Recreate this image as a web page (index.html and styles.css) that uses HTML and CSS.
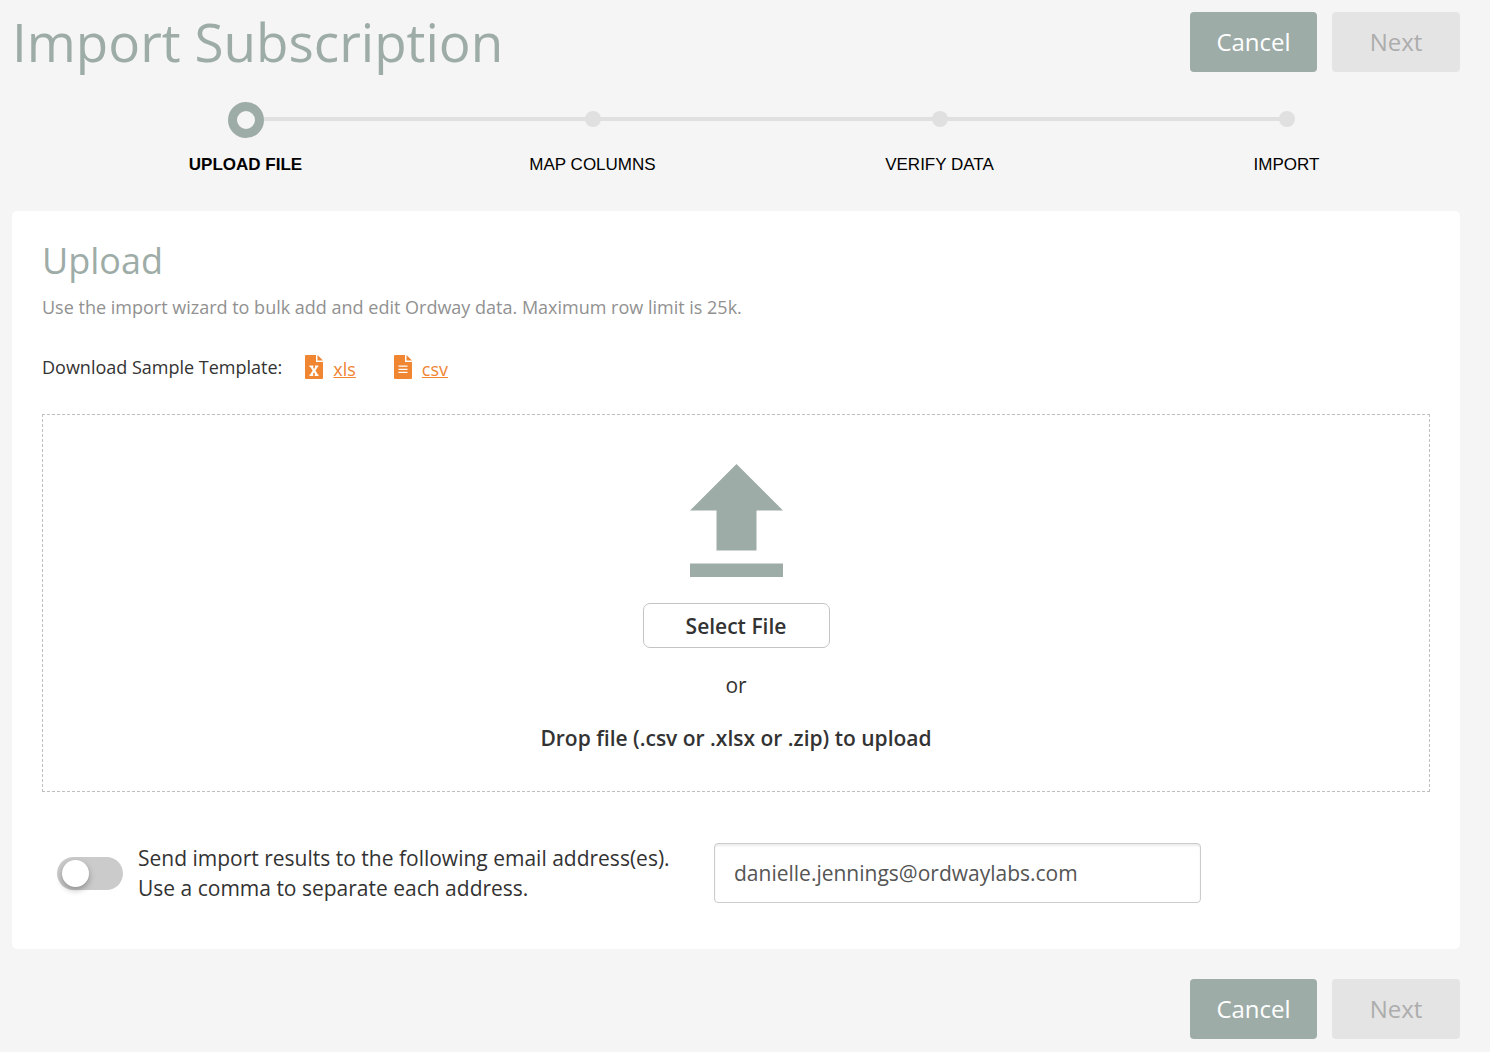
FILE: index.html
```
<!DOCTYPE html>
<html lang="en">
<head>
  <meta charset="utf-8">
  <meta name="viewport" content="width=device-width, initial-scale=1">
  <title>Import Subscription</title>
  <link rel="stylesheet" href="styles.css">
</head>
<body>
  <header class="page-header">
    <h1 class="page-title">Import Subscription</h1>
    <div class="actions">
      <button type="button" class="btn btn-cancel">Cancel</button>
      <button type="button" class="btn btn-next" disabled>Next</button>
    </div>
  </header>

  <ol class="steps">
    <li class="step step-active" aria-current="step">
      <span class="step-marker"><span class="step-dot"></span></span>
      <span class="step-label">Upload File</span>
    </li>
    <li class="step">
      <span class="step-marker"><span class="step-dot"></span></span>
      <span class="step-label">Map Columns</span>
    </li>
    <li class="step">
      <span class="step-marker"><span class="step-dot"></span></span>
      <span class="step-label">Verify Data</span>
    </li>
    <li class="step">
      <span class="step-marker"><span class="step-dot"></span></span>
      <span class="step-label">Import</span>
    </li>
  </ol>

  <main class="card">
    <h2 class="card-title">Upload</h2>
    <p class="card-hint">Use the import wizard to bulk add and edit Ordway data. Maximum row limit is 25k.</p>

    <div class="templates">
      <span class="templates-label">Download Sample Template:</span>
      <a class="template-link" href="#xls">
        <svg class="file-icon" viewBox="0 0 18 24" aria-hidden="true">
          <path fill="currentColor" d="M1 0H11V7H18V23Q18 24 17 24H1Q0 24 0 23V1Q0 0 1 0ZM12.500 0L18 5.500H12.500Z"/>
          <path fill="#fff" d="M4.500 10.500H8.300V12H8L9.200 14L10.400 12H10V10.500H13.300V12H12.700L10.400 15.600L12.900 19.500H13.500V21H9.700V19.500H10.300L9 17.300L7.700 19.500H8.200V21H4.500V19.500H5.100L7.700 15.600L5.200 12H4.500Z"/>
        </svg>
        <span class="template-name">xls</span>
      </a>
      <a class="template-link" href="#csv">
        <svg class="file-icon" viewBox="0 0 18 24" aria-hidden="true">
          <path fill="currentColor" d="M1 0H11V7H18V23Q18 24 17 24H1Q0 24 0 23V1Q0 0 1 0ZM12.500 0L18 5.500H12.500Z"/>
          <path stroke="#fff" stroke-width="1.200" d="M4.500 11.200H13.500M4.500 14.300H13.500M4.500 17.400H13.500"/>
        </svg>
        <span class="template-name">csv</span>
      </a>
    </div>

    <section class="dropzone">
      <svg class="upload-icon" viewBox="0 0 93 113" aria-hidden="true">
        <path fill="currentColor" d="M46.500 0L93 46.500H66.500V86.500H26.500V46.500H0ZM0 99.500H93V113H0Z"/>
      </svg>
      <button type="button" class="btn-select">Select File</button>
      <p class="drop-or">or</p>
      <p class="drop-text">Drop file (.csv or .xlsx or .zip) to upload</p>
    </section>

    <div class="notify">
      <div class="notify-toggle">
        <input type="checkbox" class="switch" id="send-results">
        <label for="send-results">Send import results to the following email address(es).<br>Use a comma to separate each address.</label>
      </div>
      <input type="text" class="email" aria-label="Email addresses" value="danielle.jennings@ordwaylabs.com">
    </div>
  </main>

  <footer class="page-footer">
    <div class="actions">
      <button type="button" class="btn btn-cancel">Cancel</button>
      <button type="button" class="btn btn-next" disabled>Next</button>
    </div>
  </footer>
</body>
</html>
```
FILE: styles.css
```
* {
  box-sizing: border-box;
}

body {
  margin: 0;
  padding: 12px 30px 12px 12px;
  background: #f5f5f5;
  color: #333;
  font-family: "Open Sans", sans-serif;
  font-size: 21px;
  line-height: 30px;
}

h1,
h2,
p,
ol {
  margin: 0;
}

button,
input {
  margin: 0;
  font-family: inherit;
}

/* Header and action buttons */
.page-header {
  display: flex;
  justify-content: space-between;
  align-items: flex-start;
}

.page-title {
  color: #9eaca7;
  font-size: 53px;
  line-height: 60px;
  font-weight: 400;
}

.actions {
  display: flex;
  gap: 15px;
}

.btn {
  width: 128px;
  height: 60px;
  padding: 0;
  border: 0;
  border-radius: 4px;
  font-size: 24px;
  line-height: 30px;
}

.btn-cancel {
  width: 127px;
  background: #9eaca7;
  color: #fff;
}

.btn-next {
  background: #e4e4e4;
  color: #adadad;
}

/* Wizard progress */
.steps {
  display: grid;
  grid-template-columns: repeat(4, 1fr);
  margin: 30px 0 34px;
  padding: 0 0 0 60px;
  list-style: none;
  font-family: "Liberation Sans", Arial, sans-serif;
  font-size: 17px;
  line-height: 24px;
  color: #000;
}

.step {
  display: flex;
  flex-direction: column;
  align-items: center;
  gap: 17px;
  text-transform: uppercase;
}

.step-marker {
  position: relative;
  display: flex;
  justify-content: center;
  align-items: center;
  width: 100%;
  height: 34px;
}

.step:not(:last-child) .step-marker::after {
  content: "";
  position: absolute;
  top: 15px;
  left: 50%;
  width: 100%;
  height: 4px;
  background: #e0e0e0;
}

.step-dot {
  position: relative;
  z-index: 1;
  width: 16px;
  height: 16px;
  border-radius: 50%;
  background: #e0e0e0;
}

.step-active .step-marker {
  align-items: flex-start;
}

.step-active .step-dot {
  flex: none;
  width: 36px;
  height: 36px;
  border: 9px solid #9eaca7;
  background: #f5f5f5;
}

.step-active .step-label {
  font-weight: 700;
}

/* Upload card */
.card {
  padding: 30px;
  border-radius: 5px;
  background: #fff;
}

.card-title {
  color: #9eaca7;
  font-size: 36px;
  line-height: 40px;
  font-weight: 400;
}

.card-hint {
  margin-top: 14px;
  color: #919191;
  font-size: 18px;
  line-height: 24px;
}

.templates {
  display: flex;
  align-items: center;
  margin-top: 36px;
  font-size: 18px;
  line-height: 24px;
}

.template-link {
  display: flex;
  align-items: flex-end;
  gap: 10px;
  margin-left: 23px;
  color: #f08532;
  line-height: 20px;
}

.template-link + .template-link {
  margin-left: 38px;
}

.file-icon {
  width: 18px;
  height: 24px;
}

.dropzone {
  display: flex;
  flex-direction: column;
  align-items: center;
  margin-top: 35px;
  padding: 49px 20px 38px;
  border: 1px dashed #bfbfbf;
}

.upload-icon {
  width: 93px;
  height: 113px;
  color: #9eaca7;
}

.btn-select {
  width: 187px;
  height: 45px;
  margin-top: 26px;
  padding: 0;
  border: 1px solid #c4c4c4;
  border-radius: 7px;
  background: #fff;
  color: #333;
  font-size: 21px;
  line-height: 30px;
  font-weight: 600;
}

.drop-or {
  margin-top: 22px;
}

.drop-text {
  margin-top: 23px;
  font-weight: 600;
}

/* Result notification */
.notify {
  display: grid;
  grid-template-columns: 672fr 487fr 229fr;
  align-items: center;
  margin-top: 51px;
  padding-bottom: 16px;
}

.notify-toggle {
  display: flex;
  align-items: center;
  gap: 15px;
  padding-left: 15px;
}

.switch {
  appearance: none;
  flex: none;
  display: flex;
  align-items: center;
  width: 66px;
  height: 33px;
  padding-left: 5px;
  border-radius: 17px;
  background: #cbcbcb;
}

.switch::before {
  content: "";
  width: 27px;
  height: 27px;
  border-radius: 50%;
  background: #fff;
  box-shadow: 0 3px 6px rgba(0, 0, 0, 0.3);
}

.switch:checked {
  justify-content: flex-end;
  padding: 0 5px 0 0;
  background: #9eaca7;
}

.email {
  min-width: 0;
  height: 60px;
  padding: 0 19px;
  border: 1px solid #ccc;
  border-radius: 4px;
  background: #fff;
  box-shadow: inset 0 2px 2px rgba(0, 0, 0, 0.08);
  color: #555;
  font-size: 21px;
}

.page-footer {
  display: flex;
  justify-content: flex-end;
  margin-top: 30px;
}
```
